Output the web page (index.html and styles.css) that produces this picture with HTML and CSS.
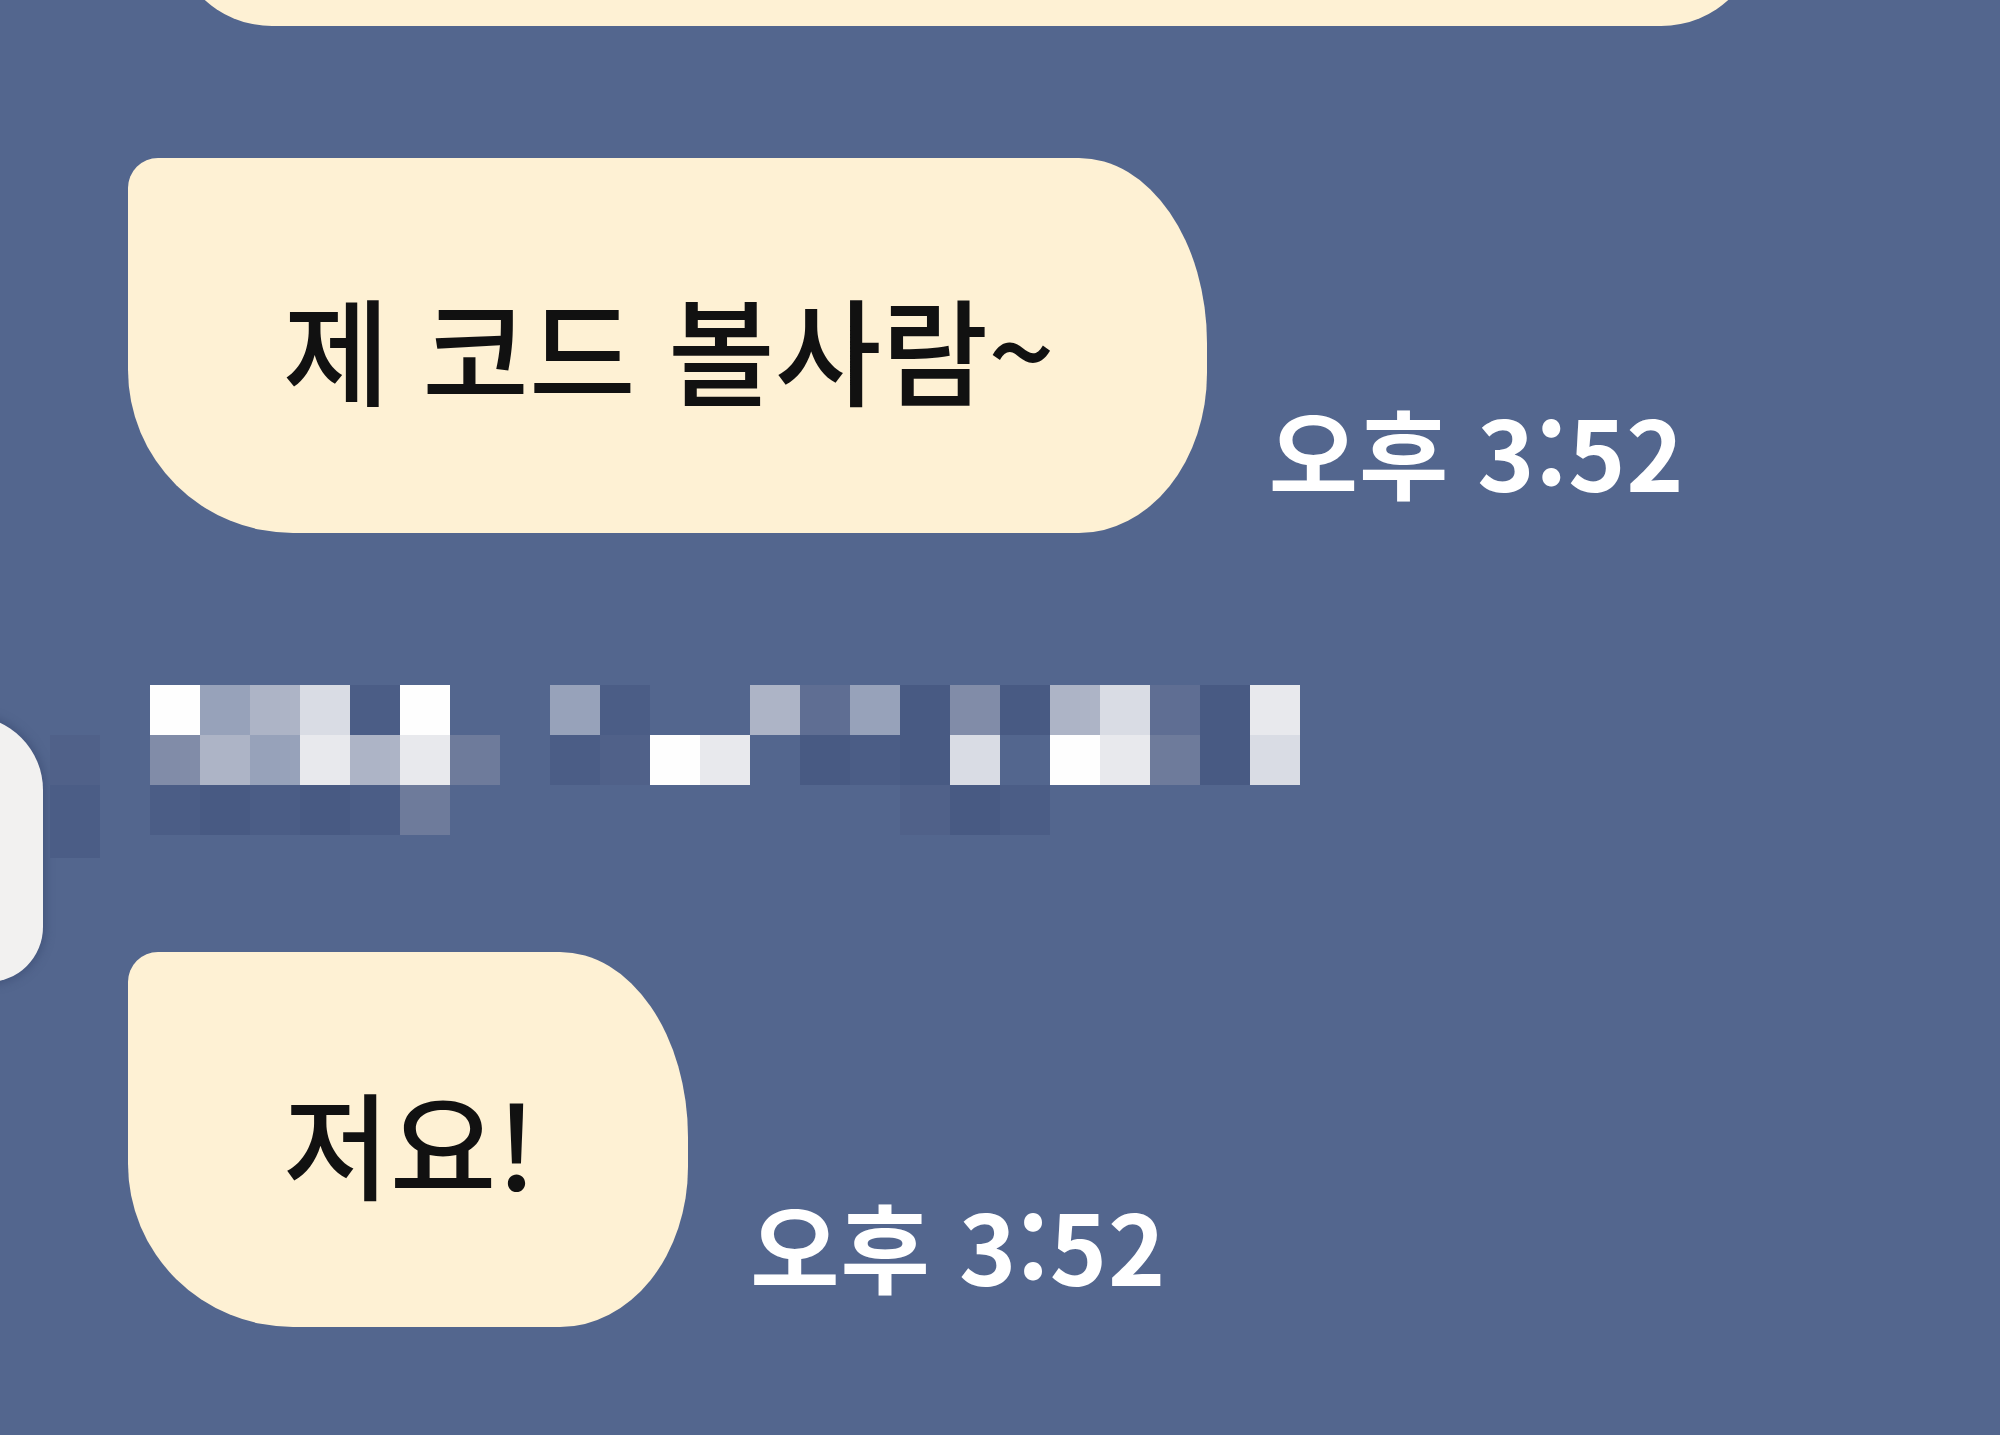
FILE: index.html
```html
<!DOCTYPE html>
<html lang="ko">
<head>
    <meta charset="UTF-8">
    <meta name="viewport" content="width=device-width, initial-scale=1.0">
    <title>채팅</title>
    <link rel="stylesheet" href="styles.css">
</head>
<body>
    <div class="feed">
        <div class="bubble bubble-prev"></div>

        <div class="msg-row first">
            <div class="bubble">제 코드 볼사람~</div>
            <span class="time">오후 3:52</span>
        </div>

        <div class="msg-group">
            <div class="avatar"></div>
            <div class="msg-body">
                <!-- blurred sender name -->
                <div class="name-mosaic">
                    <div class="mosaic-row">
                        <span></span><span></span>
                        <span class="w0"></span><span class="g2"></span><span class="g1"></span><span class="w2"></span><span class="d1"></span><span class="w0"></span><span></span><span></span><span class="g2"></span><span class="d1"></span><span></span><span></span><span class="g1"></span><span class="g5"></span><span class="g2"></span><span class="d2"></span><span class="g3"></span><span class="d2"></span><span class="g1"></span><span class="w2"></span><span class="g5"></span><span class="d2"></span><span class="w1"></span>
                    </div>
                    <div class="mosaic-row">
                        <span class="d0"></span><span></span>
                        <span class="g3"></span><span class="g1"></span><span class="g2"></span><span class="w1"></span><span class="g1"></span><span class="w1"></span><span class="g4"></span><span></span><span class="d1"></span><span class="d0"></span><span class="w0"></span><span class="w1"></span><span></span><span class="d2"></span><span class="d1"></span><span class="d2"></span><span class="w2"></span><span></span><span class="w0"></span><span class="w1"></span><span class="g4"></span><span class="d2"></span><span class="w2"></span>
                    </div>
                    <div class="mosaic-row">
                        <span class="d1"></span><span></span>
                        <span class="d1"></span><span class="d2"></span><span class="d1"></span><span class="d2"></span><span class="d1"></span><span class="g4"></span><span></span><span></span><span></span><span></span><span></span><span></span><span></span><span></span><span></span><span class="d0"></span><span class="d2"></span><span class="d1"></span>
                    </div>
                    <div class="mosaic-row short">
                        <span class="d1"></span>
                    </div>
                </div>

                <div class="msg-row">
                    <div class="bubble">저요!</div>
                    <span class="time">오후 3:52</span>
                </div>
            </div>
        </div>
    </div>
</body>
</html>
```

FILE: styles.css
```css
body {
    margin: 0;
    background-color: #53668e;
    font-family: "Noto Sans CJK KR", "Noto Sans", sans-serif;
    height: 1435px;
    overflow: hidden;
}

.feed {
    padding-left: 128px;
}

.bubble {
    background-color: #fef1d4;
    color: #111;
    font-size: 116px;
    font-weight: 500;
    line-height: 1;
    padding: 130px 152px 129px 155px;
    border-radius: 30px 128px 128px 165px / 30px 185px 160px 163px;
    white-space: nowrap;
}

.bubble-prev {
    margin: -174px 0 0 44px;
    width: 1589px;
    height: 200px;
    padding: 0;
    border-radius: 130px;
    box-sizing: border-box;
}

.msg-row {
    display: flex;
    align-items: flex-end;
}

.msg-row.first {
    margin-top: 132px;
}

.time {
    color: #fff;
    font-size: 97px;
    line-height: 1;
    font-weight: 600;
    letter-spacing: 1px;
    margin: 0 0 35px 62px;
    white-space: nowrap;
}

.msg-group {
    display: flex;
    margin: 152px 0 0 -380px;
}

.avatar {
    flex: none;
    width: 295px;
    height: 266px;
    margin-top: 31px;
    background-color: #f2f1f0;
    border-radius: 74px 74px 55px 55px;
    box-shadow: 0 0 8px 3px rgba(60, 76, 115, 0.6);
}

.msg-body {
    margin-left: 85px;
}

.name-mosaic {
    margin: 0 0 94px -78px;
}

.mosaic-row {
    display: flex;
    height: 50px;
}

.mosaic-row.short {
    height: 23px;
}

.mosaic-row span {
    flex: none;
    width: 50px;
}

.w0 { background-color: #fefefe; }
.w1 { background-color: #e8e9ed; }
.w2 { background-color: #d9dce4; }
.g1 { background-color: #adb4c6; }
.g2 { background-color: #97a2ba; }
.g3 { background-color: #818ca8; }
.g4 { background-color: #6e7b9b; }
.g5 { background-color: #5f6e93; }
.d0 { background-color: #506189; }
.d1 { background-color: #4b5d86; }
.d2 { background-color: #485a83; }
```
